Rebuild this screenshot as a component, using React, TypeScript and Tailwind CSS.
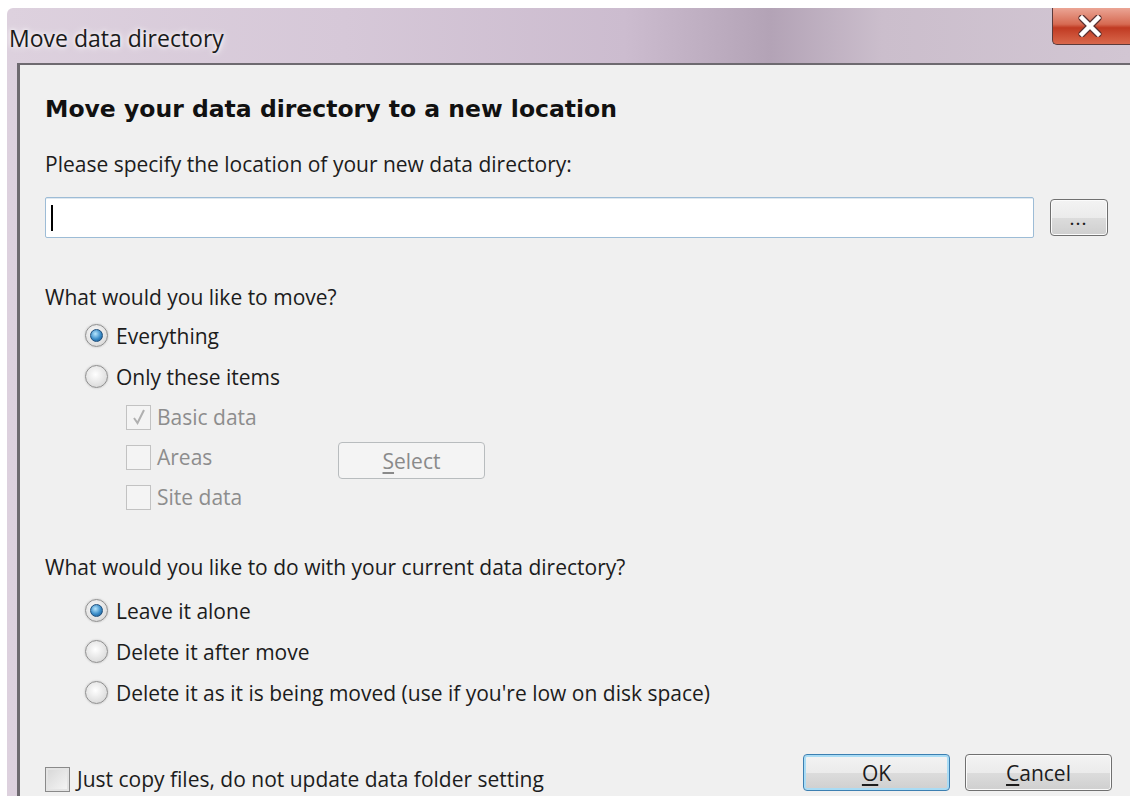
import React from "react";

const body = "font-['Open_Sans',sans-serif]";

function Radio({ checked, label }: { checked?: boolean; label: string }) {
  return (
    <div className="flex h-[41px] items-center">
      <span className="ml-[40px] flex h-[23px] w-[23px] items-center justify-center rounded-full border border-[#8e8e8e] bg-[radial-gradient(circle_at_45%_40%,#ffffff,#e0e0e0_65%,#c4c4c4)] shadow-[0_0_2px_#bdbdbd]">
        {checked && (
          <span className="h-[13px] w-[13px] rounded-full border border-[#1f4f7c] bg-[radial-gradient(circle_at_40%_35%,#b7e7ff,#3a8cc8_55%,#154e82)]" />
        )}
      </span>
      <span className="ml-[8px] leading-[26px] text-[#1c1c1c]">{label}</span>
    </div>
  );
}

function Check({ checked, label, disabled }: { checked?: boolean; label: string; disabled?: boolean }) {
  return (
    <div className="flex h-[40px] items-center">
      <span
        className={
          disabled
            ? "flex h-[25px] w-[25px] shrink-0 items-center justify-center border border-[#c2c2c2] bg-[#f4f4f4]"
            : "flex h-[25px] w-[25px] shrink-0 items-center justify-center border border-[#8a8a8a] bg-[linear-gradient(135deg,#d6d6d6,#f7f7f7)] shadow-[inset_0_0_0_2px_#e4e4e4]"
        }
      >
        {checked && (
          <svg width="16" height="18" viewBox="0 0 16 18">
            <path d="M3 10 L6.5 15 L13 2" fill="none" stroke="#b0b0b0" strokeWidth="2" />
          </svg>
        )}
      </span>
      <span className={disabled ? "ml-[6px] leading-[26px] text-[#8d8d8d]" : "ml-[7px] leading-[26px] text-[#1c1c1c]"}>
        {label}
      </span>
    </div>
  );
}

function Button({ label, accel, kind }: { label: string; accel: string; kind?: "default" | "disabled" }) {
  const frame =
    kind === "default"
      ? "border-[#3c7fb1] shadow-[inset_0_0_0_2px_#a9dcf5]"
      : kind === "disabled"
      ? "border-[#b8bcbe]"
      : "border-[#707070] shadow-[inset_0_0_0_1px_#fbfbfb]";
  const fill =
    kind === "disabled"
      ? "bg-[#f4f4f4] text-[#8a8a8a]"
      : "bg-[linear-gradient(#f3f3f3,#ebebeb_50%,#dcdcdc_51%,#cfcfcf)] text-[#1c1c1c]";
  return (
    <div className={`flex h-[37px] w-[147px] items-center justify-center rounded-[4px] border ${frame} ${fill}`}>
      <span className="leading-[26px]">
        <span className="underline underline-offset-[3px]">{accel}</span>
        {label}
      </span>
    </div>
  );
}

export default function App() {
  return (
    <div className={`h-[796px] w-[1130px] overflow-hidden bg-white pt-[8px] pl-[7px] ${body} text-[21px]`}>
      <div className="flex h-[788px] flex-col rounded-tl-[6px] bg-[linear-gradient(90deg,#ddd1de,#d6c8d8_30%,#ccbccf_55%,#b3a3b6_68%,#cbbecc_78%,#d2c6d3)]">
        {/* caption */}
        <div className="flex h-[55px] items-start">
          <div className="pt-[16px] pl-[2px] text-[23px] leading-[28px] text-[#1a1a1a] [text-shadow:0_0_8px_#ffffff,0_0_4px_#ffffff]">
            Move data directory
          </div>
          <div className="ml-auto flex h-[37px] w-[78px] items-center justify-center rounded-bl-[5px] border-b border-l border-[#5b3b3b] bg-[linear-gradient(#eba595,#d66a52_45%,#c03a22_55%,#d9684c)]">
            <svg width="26" height="22" viewBox="0 0 26 22" className="-ml-[4px]">
              <path d="M5 3 L21 19 M21 3 L5 19" stroke="#5a3030" strokeWidth="7" strokeLinecap="round" />
              <path d="M5 3 L21 19 M21 3 L5 19" stroke="#ffffff" strokeWidth="4.5" strokeLinecap="square" />
            </svg>
          </div>
        </div>

        <div className="flex flex-1">
          <div className="w-[10px]" />
          {/* client area */}
          <div className="flex flex-1 flex-col border-t-2 border-l-[3px] border-[#6e6a70] bg-[#f0f0f0] pl-[25px] text-[#1c1c1c]">
            <div className="mt-[30px] font-['DejaVu_Sans',sans-serif] text-[23.5px] font-bold leading-[28px] text-[#111]">
              Move your data directory to a new location
            </div>
            <div className="mt-[28px] leading-[26px]">Please specify the location of your new data directory:</div>

            <div className="mt-[20px] flex items-center">
              <div className="flex h-[41px] w-[989px] items-center rounded-[2px] border border-[#9dbcd6] bg-white pl-[5px] shadow-[inset_0_1px_0_#dfe8f0]">
                <span className="h-[26px] w-[2px] bg-black" />
              </div>
              <div className="ml-[16px] flex h-[37px] w-[58px] items-end justify-center rounded-[4px] border border-[#707070] bg-[linear-gradient(#f3f3f3,#ebebeb_50%,#dcdcdc_51%,#cfcfcf)] pb-[8px] shadow-[inset_0_0_0_1px_#fbfbfb]">
                <span className="text-[14px] leading-none font-bold tracking-[2px]">...</span>
              </div>
            </div>

            <div className="mt-[46px] leading-[26px]">What would you like to move?</div>
            <div className="mt-[5px]">
              <Radio checked label="Everything" />
              <Radio label="Only these items" />
            </div>

            <div className="ml-[81px] flex">
              <div className="flex w-[212px] flex-col">
                <Check disabled checked label="Basic data" />
                <Check disabled label="Areas" />
                <Check disabled label="Site data" />
              </div>
              <div className="mt-[45px]">
                <Button kind="disabled" accel="S" label="elect" />
              </div>
            </div>

            <div className="mt-[37px] leading-[26px]">What would you like to do with your current data directory?</div>
            <div className="mt-[10px]">
              <Radio checked label="Leave it alone" />
              <Radio label="Delete it after move" />
              <Radio label="Delete it as it is being moved (use if you're low on disk space)" />
            </div>

            <div className="mt-[auto] mb-[5px] flex items-end">
              <div className="-mb-[8px]">
                <Check label="Just copy files, do not update data folder setting" />
              </div>
              <div className="ml-auto mr-[18px] flex gap-[15px]">
                <Button kind="default" accel="O" label="K" />
                <Button accel="C" label="ancel" />
              </div>
            </div>
          </div>
        </div>
      </div>
    </div>
  );
}
